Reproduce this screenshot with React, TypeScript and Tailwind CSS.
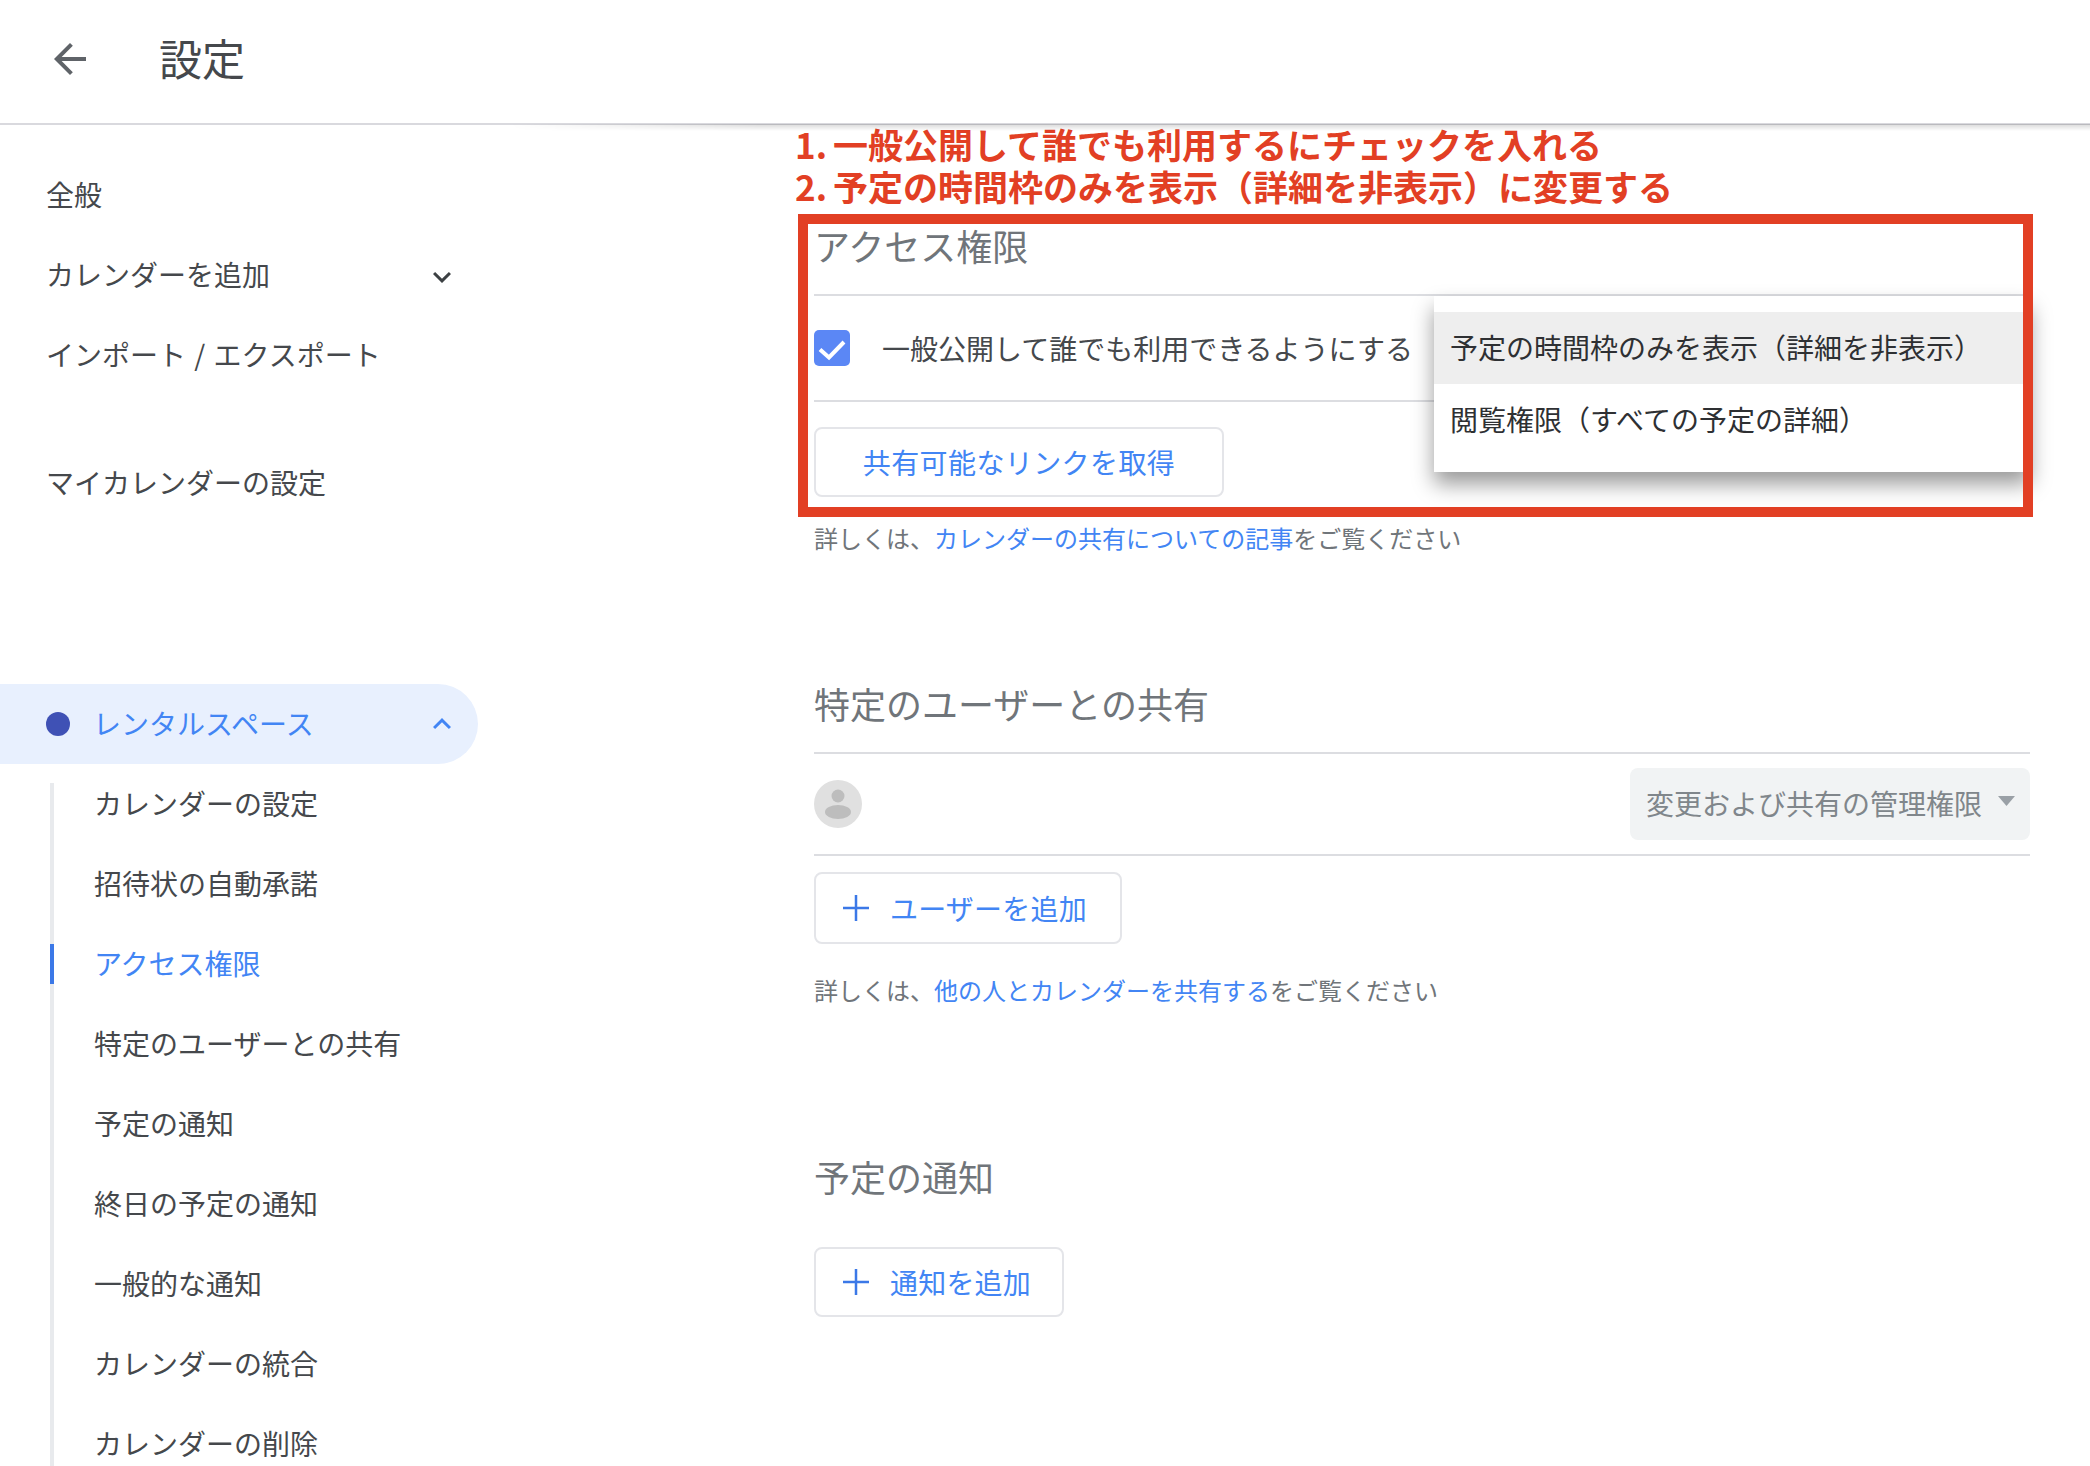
import React from "react";

const NOTE = "h-[36px] text-[24px] leading-[34px] text-[#70757a]";
const BLUE = "text-[#4285f4]";
const OUTLINE = "flex items-center rounded-lg border-2 border-[#e4e5e9] bg-white text-[28px] text-[#4285f4]";

function Plus() {
  return (
    <svg width="26" height="26" viewBox="0 0 26 26" className="shrink-0" fill="none" stroke="#3b78e7" strokeWidth="2.5">
      <path d="M13 0v26M0 13h26" />
    </svg>
  );
}

function Chevron({ up, color, className }: { up?: boolean; color: string; className: string }) {
  return (
    <svg width="36" height="36" viewBox="0 0 24 24" fill={color} className={`shrink-0 ${className}`}>
      <path d={up ? "M12 8l-6 6 1.41 1.41L12 10.83l4.59 4.58L18 14z" : "M16.59 8.59L12 13.17 7.41 8.59 6 10l6 6 6-6z"} />
    </svg>
  );
}

const subItems = [
  "カレンダーの設定",
  "招待状の自動承諾",
  "アクセス権限",
  "特定のユーザーとの共有",
  "予定の通知",
  "終日の予定の通知",
  "一般的な通知",
  "カレンダーの統合",
  "カレンダーの削除",
];

function Sidebar() {
  return (
    <aside className="w-[478px] shrink-0 pt-[30px] text-[28px] text-[#45484c]">
      <div className="flex h-[80px] items-center pb-[2px] pl-[46px]">全般</div>
      <div className="flex h-[80px] items-center justify-between pb-[2px] pl-[46px] pr-[18px]">
        <span>カレンダーを追加</span>
        <Chevron color="#3c4043" className="mt-[5px]" />
      </div>
      <div className="flex h-[80px] items-center pb-[2px] pl-[46px] [word-spacing:2px]">インポート / エクスポート</div>
      <div className="mt-[48px] flex h-[80px] items-center pb-[2px] pl-[46px]">マイカレンダーの設定</div>
      <div className="mt-[161px] flex h-[80px] items-center rounded-r-[40px] bg-[#e8f0fe] pb-[2px] pl-[46px] pr-[18px] text-[#4285f4]">
        <span className="mt-[2px] h-[24px] w-[24px] shrink-0 rounded-full bg-[#3f51b5]" />
        <span className="ml-[23px] flex-1">レンタルスペース</span>
        <Chevron up color="#4285f4" className="mt-[2px]" />
      </div>
      <div className="ml-[50px] mt-[19px] flow-root h-[683px] border-l-4 border-[#e8eaed]">
        <div className="-mt-[19px]">
          {subItems.map((item) => {
            const active = item === "アクセス権限";
            return (
              <div key={item} className={`relative flex h-[80px] items-center pb-[2px] pl-[40px] ${active ? BLUE : ""}`}>
                {active && <span className="absolute -left-[4px] top-[20px] h-[40px] w-[4px] bg-[#3b78e7]" />}
                {item}
              </div>
            );
          })}
        </div>
      </div>
    </aside>
  );
}

function AccessSection() {
  return (
    <section className="relative mt-[17px]">
      <div className="h-[72px] border-b-2 border-[#dcdde1] text-[36px] leading-[42px] text-[#70757a]">アクセス権限</div>
      <div className="flex h-[106px] items-center border-b-2 border-[#dcdde1]">
        <span className="flex h-[36px] w-[36px] items-center justify-center rounded-[5px] bg-[#5b87f5]">
          <svg width="36" height="36" viewBox="0 0 36 36" fill="none" stroke="#fff" strokeWidth="4">
            <path d="M6 19.5l9 8L30 12" />
          </svg>
        </span>
        <span className="ml-[32px] text-[28px] text-[#45484c]">一般公開して誰でも利用できるようにする</span>
      </div>
      <button className={`mt-[25px] h-[70px] w-[410px] justify-center tracking-[0.4px] ${OUTLINE}`}>共有可能なリンクを取得</button>

      <div className="absolute left-[620px] top-[72px] h-[176px] w-[596px] bg-white py-[16px] text-[28px] text-[#2e3033] shadow-[0_12px_20px_rgba(0,0,0,0.4)]">
        <div className="flex h-[72px] items-center bg-[#eeeeee] pb-[2px] pl-[16px]">予定の時間枠のみを表示（詳細を非表示）</div>
        <div className="flex h-[72px] items-center pb-[2px] pl-[16px]">閲覧権限（すべての予定の詳細）</div>
      </div>

      <div className="pointer-events-none absolute -left-[16px] -top-[10px] h-[303px] w-[1235px] border-[10px] border-[#e23f24]" />

      <p className={`mt-[24px] ${NOTE}`}>
        詳しくは、<span className={BLUE}>カレンダーの共有についての記事</span>をご覧ください
      </p>
    </section>
  );
}

function ShareSection() {
  return (
    <section className="mt-[126px]">
      <div className="h-[71px] border-b-2 border-[#dcdde1] text-[36px] leading-[40px] text-[#70757a]">特定のユーザーとの共有</div>
      <div className="flex h-[102px] items-center justify-between border-b-2 border-[#dcdde1]">
        <svg width="48" height="48" viewBox="0 0 48 48">
          <circle cx="24" cy="24" r="24" fill="#e0e0e0" />
          <circle cx="24" cy="16" r="6.5" fill="#bdbdbd" />
          <ellipse cx="24" cy="32" rx="13" ry="7" fill="#bdbdbd" />
        </svg>
        <div className="flex h-[72px] w-[400px] items-center justify-between rounded-lg bg-[#f1f3f4] pb-[2px] pl-[16px] pr-[15px] text-[28px] text-[#80868b]">
          <span>変更および共有の管理権限</span>
          <svg width="17" height="10" viewBox="0 0 17 10" className="-mt-[4px]" fill="#9aa0a6">
            <path d="M0 0h17L8.5 10z" />
          </svg>
        </div>
      </div>
      <button className={`mt-[16px] h-[72px] w-[308px] gap-[21px] pl-[27px] tracking-[0.2px] ${OUTLINE}`}>
        <Plus />
        ユーザーを追加
      </button>
      <p className={`mt-[29px] ${NOTE}`}>
        詳しくは、<span className={BLUE}>他の人とカレンダーを共有する</span>をご覧ください
      </p>
    </section>
  );
}

function NotifySection() {
  return (
    <section className="mt-[147px]">
      <div className="h-[44px] text-[36px] leading-[40px] text-[#70757a]">予定の通知</div>
      <button className={`mt-[47px] h-[70px] w-[250px] gap-[21px] pl-[27px] tracking-[0.2px] ${OUTLINE}`}>
        <Plus />
        通知を追加
      </button>
    </section>
  );
}

export default function App() {
  return (
    <div className="relative h-[1466px] w-[2090px] overflow-hidden bg-white font-['Noto_Sans_CJK_JP','Noto_Sans',sans-serif]">
      <header className="flex h-[125px] items-center border-b-2 border-[#d9d9de] pb-[6px] pl-[46px]">
        <svg width="48" height="48" viewBox="0 0 24 24" fill="#5f6368">
          <path d="M20 11H7.83l5.59-5.59L12 4l-8 8 8 8 1.41-1.41L7.83 13H20v-2z" />
        </svg>
        <h1 className="-mt-[3px] ml-[65px] text-[43px] font-normal text-[#45484c]">設定</h1>
      </header>
      <div className="absolute left-[510px] right-0 top-[124px] h-[7px] bg-linear-to-b from-black/15 to-transparent [mask-image:linear-gradient(to_right,transparent,black_250px)]" />

      <div className="flex">
        <Sidebar />
        <main className="ml-[336px] w-[1216px]">
          <div className="-ml-[19px] -mt-[2px] text-[35px] font-bold leading-[42px] text-[#e23f24] [word-spacing:-2px]">
            <div>1. 一般公開して誰でも利用するにチェックを入れる</div>
            <div>2. 予定の時間枠のみを表示（詳細を非表示）に変更する</div>
          </div>
          <AccessSection />
          <ShareSection />
          <NotifySection />
        </main>
      </div>
    </div>
  );
}
